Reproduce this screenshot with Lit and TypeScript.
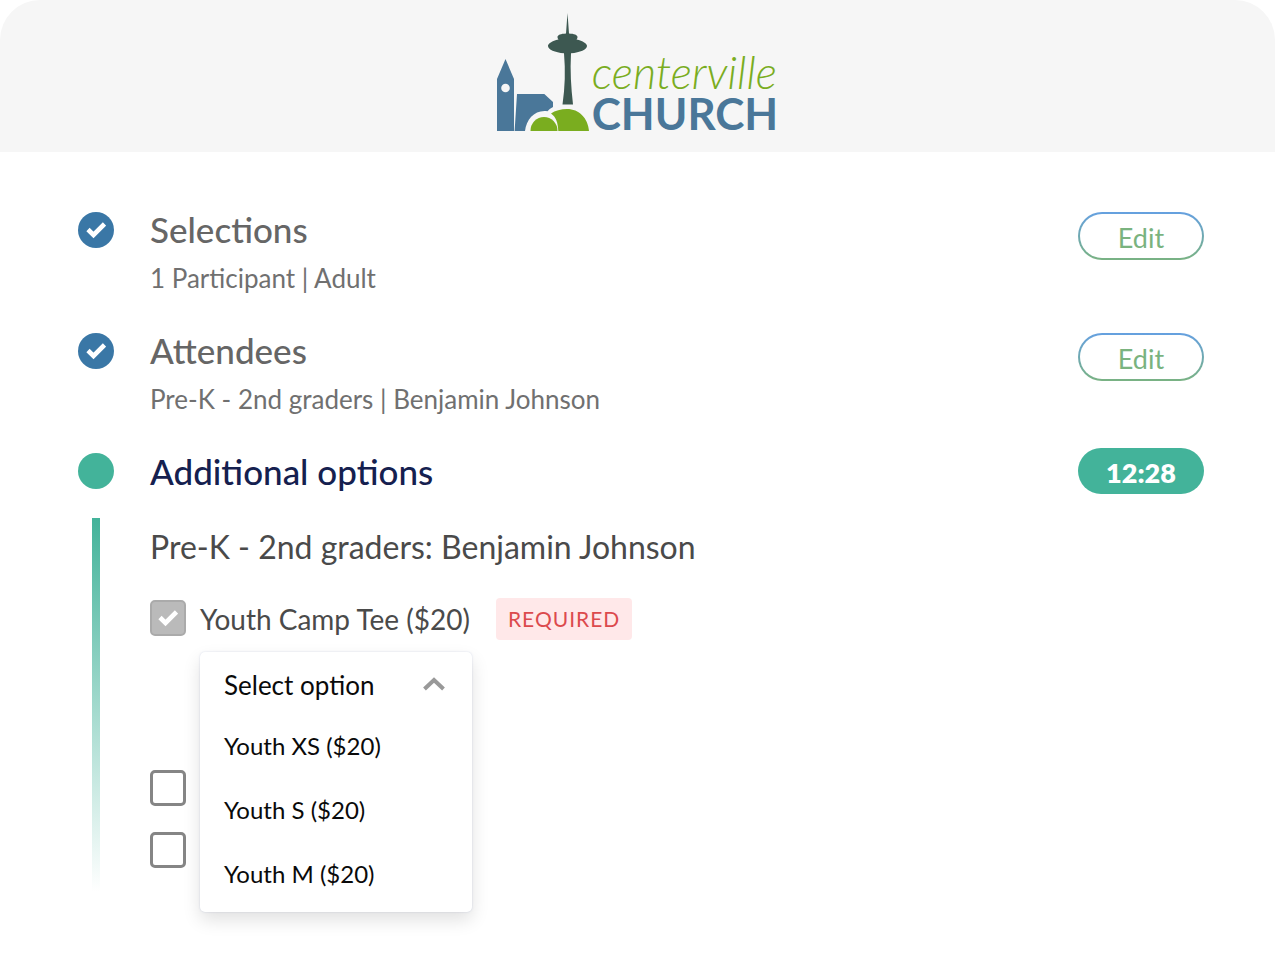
import { LitElement, html, css, svg, nothing } from "lit";
import { customElement, property, state } from "lit/decorators.js";

const tick = svg`<path d="M2 9.5 L7.5 15 L18.5 4" fill="none" stroke="currentColor" stroke-width="4.6" />`;

@customElement("church-logo")
class ChurchLogo extends LitElement {
  static styles = css`
    :host {
      display: flex;
      align-items: flex-end;
      gap: 2px;
    }
    .mark {
      display: block;
      width: 93px;
      height: 118px;
    }
    .name {
      display: flex;
      flex-direction: column;
    }
    .first {
      font-size: 45px;
      line-height: 46px;
      font-weight: 300;
      font-style: italic;
      color: #7aad1f;
    }
    .second {
      font-size: 44px;
      line-height: 36px;
      font-weight: 700;
      color: #4a7799;
    }
  `;

  render() {
    return html`
      <svg class="mark" viewBox="0 0 93 118" aria-hidden="true">
        <path
          fill="#4a7799"
          d="M0 118V66L8.5 46L17 66V118Z M17.6 118L20 81H47.3L56 89V94Q52 96 50.5 98.300C38 96.500 29.500 106 28 118Z"
        />
        <circle cx="8.500" cy="75" r="4.300" fill="#f6f6f6" />
        <path
          fill="#3d5851"
          d="M70.500 0L72 20.500C77 20.700 80.500 22 80.500 24C80.500 25 80 26 79.500 26.500C86 28 90 30.500 90 33C90 36.500 83 39.500 74 40.300C73 58 74 74 76 91.500H65.500C68 74 68.500 58 67 40.300C58 39.500 51 36.500 51 33C51 30.500 55 28 61.500 26.500C61 26 60.500 25 60.500 24C60.500 22 64 20.700 69 20.500Z"
        />
        <path fill="#7aad1f" d="M33.500 118A13.500 14 0 0 1 60.500 118Z" />
        <path
          fill="#7aad1f"
          d="M61.300 118C61 110 59 104 54 100.500C58 97.500 64 96 70 96C82 96 91 105 92 118Z"
        />
      </svg>
      <div class="name">
        <span class="first">centerville</span>
        <span class="second">CHURCH</span>
      </div>
    `;
  }
}

@customElement("step-row")
class StepRow extends LitElement {
  @property() heading = "";
  @property({ attribute: false }) details: string[] = [];

  static styles = css`
    :host {
      display: grid;
      grid-template-columns: 36px 1fr auto;
      column-gap: 36px;
      align-items: start;
    }
    .done {
      display: grid;
      place-items: center;
      height: 36px;
      border-radius: 50%;
      background: #3a77a6;
      color: #fff;
    }
    .tick {
      width: 20px;
      height: 20px;
    }
    .heading {
      margin: 0;
      font-size: 35px;
      line-height: 34px;
      font-weight: 500;
      color: #666;
    }
    .detail {
      margin: 16px 0 0;
      font-size: 26px;
      line-height: 32px;
      color: #707070;
    }
    .edit {
      width: 126px;
      height: 48px;
      padding: 3px 0 0;
      border: 2px solid transparent;
      border-radius: 24px;
      background:
        linear-gradient(#fff, #fff) padding-box,
        linear-gradient(#65a0e0, #79b283) border-box;
      font: inherit;
      font-size: 27px;
      color: #7ab37f;
      cursor: pointer;
    }
  `;

  render() {
    return html`
      <span class="done"><svg class="tick" viewBox="0 0 20 20" aria-hidden="true">${tick}</svg></span>
      <div>
        <h2 class="heading">${this.heading}</h2>
        <p class="detail">${this.details.join(" | ")}</p>
      </div>
      <button class="edit" type="button" aria-label="Edit ${this.heading}">Edit</button>
    `;
  }
}

@customElement("option-picker")
class OptionPicker extends LitElement {
  @property({ attribute: false }) choices: string[] = [];
  @state() private open = true;
  @state() private value = "";

  static styles = css`
    :host {
      display: block;
      position: relative;
      width: 272px;
      height: 70px;
    }
    .panel {
      position: absolute;
      inset: 0 0 auto;
      z-index: 1;
      border-radius: 5px;
      background: #fff;
      box-shadow:
        0 8px 18px rgba(0, 0, 0, 0.12),
        0 0 2px rgba(90, 110, 170, 0.25);
    }
    .head {
      position: relative;
    }
    .select {
      appearance: none;
      display: block;
      width: 100%;
      height: 62px;
      padding: 4px 60px 0 24px;
      border: 0;
      border-radius: 5px;
      background: transparent;
      font: inherit;
      font-size: 26px;
      color: #0a0a0a;
      cursor: pointer;
    }
    .chevron {
      position: absolute;
      right: 27px;
      top: 25px;
      width: 22px;
      height: 14px;
      pointer-events: none;
    }
    .list {
      margin: 0;
      padding: 0 0 6px;
      list-style: none;
    }
    .item {
      padding: 0 24px;
      font-size: 24px;
      line-height: 64px;
      color: #0a0a0a;
      cursor: pointer;
    }
  `;

  private toggle(e: Event) {
    e.preventDefault();
    this.open = !this.open;
  }

  private pick(choice: string) {
    this.value = choice;
    this.open = false;
  }

  render() {
    return html`
      <div class="panel">
        <div class="head">
          <select class="select" aria-label="Shirt size" .value=${this.value} @mousedown=${this.toggle}>
            <option value="">Select option</option>
            ${this.choices.map((c) => html`<option value=${c}>${c}</option>`)}
          </select>
          <svg class="chevron" viewBox="0 0 22 14" aria-hidden="true">
            <path d="M1.500 12L11 3L20.500 12" fill="none" stroke="#999" stroke-width="4" />
          </svg>
        </div>
        ${this.open
          ? html`<ul class="list" role="listbox" aria-label="Shirt size">
              ${this.choices.map(
                (c) => html`<li class="item" role="option" aria-selected="false" @click=${() => this.pick(c)}>${c}</li>`
              )}
            </ul>`
          : nothing}
      </div>
    `;
  }
}

@customElement("app-root")
class AppRoot extends LitElement {
  static styles = css`
    :host {
      display: block;
      min-height: 100vh;
      background: #fff;
      font-family: Lato, "Liberation Sans", sans-serif;
    }
    .top {
      display: flex;
      justify-content: center;
      padding: 13px 0 21px;
      border-radius: 40px 40px 0 0;
      background: #f6f6f6;
    }
    .steps {
      display: flex;
      flex-direction: column;
      gap: 39px;
      padding: 60px 71px 60px 78px;
    }
    .current {
      display: grid;
      grid-template-columns: 36px 1fr auto;
      column-gap: 36px;
      row-gap: 24px;
      align-items: center;
      margin-top: -6px;
    }
    .dot {
      height: 36px;
      border-radius: 50%;
      background: #43b39a;
    }
    .heading {
      margin: 0;
      font-size: 35px;
      line-height: 46px;
      font-weight: 500;
      color: #15204f;
    }
    .timer {
      width: 126px;
      box-sizing: border-box;
      padding-top: 4px;
      border-radius: 24px;
      background: #43b39a;
      font-size: 27px;
      line-height: 42px;
      font-weight: 800;
      text-align: center;
      color: #fff;
    }
    .rail {
      align-self: stretch;
      justify-self: center;
      width: 8px;
      background: linear-gradient(#43b39a, rgba(67, 179, 154, 0));
    }
    .body {
      grid-column: 2 / -1;
      padding: 8px 0 24px;
    }
    .person {
      margin: 0;
      font-size: 32px;
      line-height: 42px;
      font-weight: 400;
      color: #4a4a4a;
    }
    .choice {
      display: flex;
      align-items: center;
      margin-top: 30px;
      gap: 26px;
    }
    .label {
      display: flex;
      align-items: center;
      gap: 14px;
      font-size: 28px;
      line-height: 42px;
      color: #4a4a4a;
    }
    .box {
      appearance: none;
      box-sizing: border-box;
      display: grid;
      place-items: center;
      width: 36px;
      height: 36px;
      margin: 0;
      border: 3px solid #858585;
      border-radius: 5px;
      background: #fff;
    }
    .checked {
      display: grid;
      padding-bottom: 3px;
    }
    .checked > * {
      grid-area: 1 / 1;
      place-self: center;
    }
    .checked .box {
      border: 2px solid #aaa;
      background: #bababa;
    }
    .tick {
      width: 20px;
      height: 20px;
      color: #fff;
      pointer-events: none;
    }
    .tag {
      padding: 0 12px;
      border-radius: 4px;
      background: #ffe8e9;
      font-size: 21px;
      line-height: 42px;
      letter-spacing: 1px;
      color: #dc4a4d;
    }
    .picker {
      margin: 12px 0 0 50px;
    }
    .others {
      display: flex;
      flex-direction: column;
      gap: 26px;
      margin-top: 48px;
    }
  `;

  render() {
    return html`
      <header class="top"><church-logo role="img" aria-label="Centerville Church"></church-logo></header>
      <main class="steps">
        <step-row heading="Selections" .details=${["1 Participant", "Adult"]}></step-row>
        <step-row heading="Attendees" .details=${["Pre-K - 2nd graders", "Benjamin Johnson"]}></step-row>
        <section class="current">
          <span class="dot"></span>
          <h2 class="heading">Additional options</h2>
          <span class="timer" role="timer">12:28</span>
          <span class="rail"></span>
          <div class="body">
            <h3 class="person">Pre-K - 2nd graders: Benjamin Johnson</h3>
            <div class="choice">
              <label class="label">
                <span class="checked">
                  <input class="box" type="checkbox" checked disabled />
                  <svg class="tick" viewBox="0 0 20 20" aria-hidden="true">${tick}</svg>
                </span>
                Youth Camp Tee ($20)
              </label>
              <span class="tag">REQUIRED</span>
            </div>
            <option-picker
              class="picker"
              .choices=${["Youth XS ($20)", "Youth S ($20)", "Youth M ($20)"]}
            ></option-picker>
            <div class="others">
              <input class="box" type="checkbox" aria-label="Second extra" />
              <input class="box" type="checkbox" aria-label="Third extra" />
            </div>
          </div>
        </section>
      </main>
    `;
  }
}
